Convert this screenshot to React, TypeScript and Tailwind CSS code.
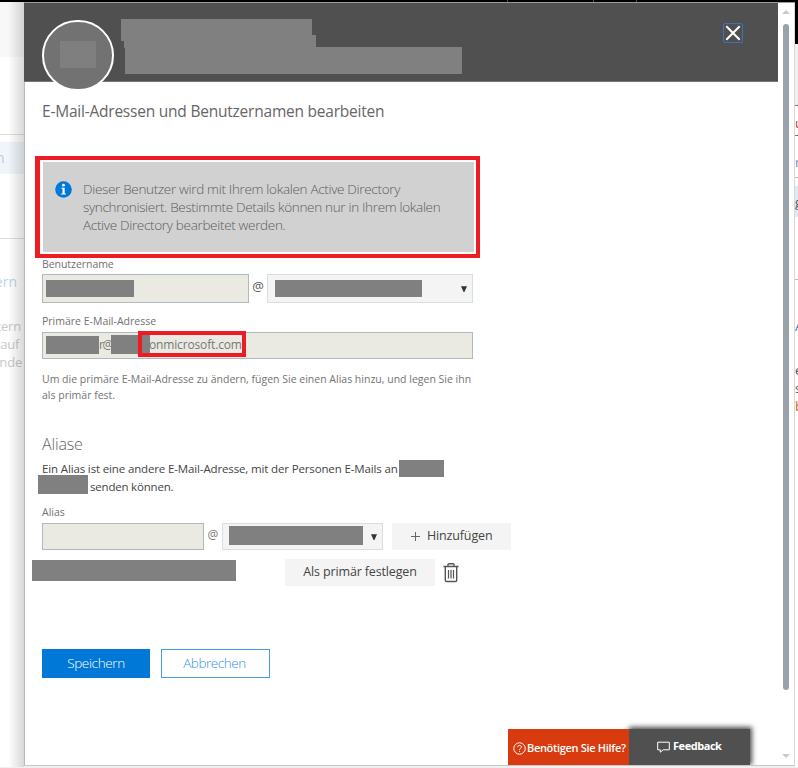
import React from "react";

function Mask({ className }: { className: string }) {
  return <span aria-hidden="true" className={`block shrink-0 bg-[#808080] ${className}`} />;
}

function BackdropLeft() {
  return (
    <div className="relative h-[765px] w-6 shrink-0 overflow-hidden bg-white text-[14px] leading-[18px] text-[#c9c9c9]">
      <div className="h-[55px] bg-[#f8f8f8]" />
      <div className="h-[78px] border-b border-[#dedede]" />
      <div className="mt-[7px] h-8 bg-[#eff5fa] pt-[7px]">
        <span className="-ml-1">n</span>
      </div>
      <div className="h-[65px] border-b border-[#dedede]" />
      <div className="mt-[34px] flex h-[18px] w-[17px] justify-end text-[#bfd3e9]">ern</div>
      <div className="mt-[26px] flex h-[18px] w-[21px] justify-end text-[13px] tracking-[-0.2px]">tern</div>
      <div className="flex h-[18px] w-[19px] justify-end text-[13px] tracking-[-0.3px]">auf</div>
      <div className="flex h-[18px] w-[22px] justify-end text-[13px] tracking-[-0.2px]">nde</div>
      <div className="absolute inset-y-0 right-0 w-4 bg-gradient-to-r from-transparent to-black/15" />
    </div>
  );
}

function BackdropRight() {
  return (
    <div className="h-[765px] w-[3px] shrink-0 overflow-hidden bg-white text-[13px] leading-[18px] text-[#555]">
      <div className="h-[42px] bg-black" />
      <div className="h-[62px] border-b border-[#777] bg-[#f0f0f0]" />
      <div className="h-[30px] border-b border-[#777] pt-[8px] text-[#a04040]">u</div>
      <div className="h-[42px] border-b border-[#bbb] pt-[17px] text-[#7090c0]">n</div>
      <div className="mt-2 h-[31px] bg-[#dcebf7] pt-[7px]">g</div>
      <div className="h-[63px] border-b border-[#bbb]" />
      <div className="h-[37px]" />
      <div className="h-[44px] text-[#4870b0]">A</div>
      <div>e</div>
      <div>s</div>
      <div className="text-[#c07020]">b</div>
    </div>
  );
}

function PanelHeader() {
  return (
    <header className="relative h-[79px] w-[754px] border-b border-[#777] bg-[#505050]">
      <div className="absolute left-[18px] top-[17px] flex h-[71px] w-[72px] items-start justify-center rounded-full border-2 border-white bg-[#727272] pt-[19px]">
        <span className="block h-[27px] w-9 bg-[#7f7f7f]" />
      </div>
      <div className="ml-[97px] pt-4">
        <Mask className="h-[17px] w-[191px]" />
        <Mask className="-mt-px ml-0 h-[6px] w-[195px]" />
        <Mask className="ml-[3px] h-[7px] w-[192px]" />
        <Mask className="-mt-px ml-1 h-[27px] w-[337px]" />
      </div>
      <button aria-label="Schließen" className="absolute left-[699px] top-[20px] flex h-5 w-5 items-center justify-center rounded-[2px] border-[1.5px] border-[#3f70bd]">
        <svg width="18" height="18" viewBox="0 0 18 18" fill="none" stroke="#fff" strokeWidth="2" className="shrink-0">
          <path d="M2.3 2.3 15.7 15.7M15.7 2.3 2.3 15.7" />
        </svg>
      </button>
    </header>
  );
}

function Notice() {
  return (
    <div className="-ml-[7px] mt-[33px] h-[102px] w-[445px] border-4 border-l-[5px] border-[#ed1c24] bg-white py-[2px] pl-[3px] pr-[2px]">
      <div className="flex h-[90px] bg-[#d1d1d1] pl-3 pt-[18px]">
        <svg width="17" height="17" viewBox="0 0 17 17" className="mt-[1px] shrink-0">
          <circle cx="8.5" cy="8.5" r="8.3" fill="#0078d7" />
          <circle cx="8.5" cy="4.2" r="1.4" fill="#fff" />
          <path d="M6.5 6.8h3.2v5.6h1.2v1H6.1v-1h1.4V7.8h-1z" fill="#fff" />
        </svg>
        <p className="ml-[11px] whitespace-nowrap text-[13.5px] font-light leading-[18px] text-[#5c5c5c]">
          <span className="block tracking-[-0.32px]">Dieser Benutzer wird mit Ihrem lokalen Active Directory</span>
          <span className="block tracking-[-0.32px]">synchronisiert. Bestimmte Details können nur in Ihrem lokalen</span>
          <span className="block tracking-[-0.32px]">Active Directory bearbeitet werden.</span>
        </p>
      </div>
    </div>
  );
}

function Caret({ className }: { className: string }) {
  return (
    <svg width="6" height="6" viewBox="0 0 6 6" className={`shrink-0 ${className}`}>
      <path d="M0 .3h6L3.4 6h-.8z" fill="#333" />
    </svg>
  );
}

function TrashIcon() {
  return (
    <svg width="16" height="20" viewBox="0 0 16 20" fill="none" stroke="#555" className="ml-2 shrink-0">
      <path d="M.5 3.5h15M5 3.2V1.6C5 1 5.5.8 6 .8h4c.5 0 1 .2 1 .8v1.6M2.3 3.8v13.4c0 .8.5 1.3 1.3 1.3h8.8c.8 0 1.3-.5 1.3-1.3V3.8" strokeWidth="1.4" />
      <path d="M5.5 7v8.5M8 7v8.5M10.5 7v8.5" strokeWidth="1.2" />
    </svg>
  );
}

function Form() {
  return (
    <main className="flex-1 whitespace-nowrap pl-[18px]">
      <h1 className="mt-[17px] h-6 text-[15.5px] leading-6 tracking-[-0.22px] text-[#666]">E-Mail-Adressen und Benutzernamen bearbeiten</h1>
      <Notice />
      <label className="block h-4 text-[10.5px] leading-[12px] tracking-[-0.05px] text-[#717171]">Benutzername</label>
      <div className="flex h-[29px] items-center">
        <div className="flex h-[29px] w-[207px] items-center border border-[#aebabd] bg-[#eaeae3] pl-[3px]">
          <Mask className="-mt-px h-[17px] w-[88px]" />
        </div>
        <span className="-mt-1 w-[18px] text-center text-[13px] text-[#555]">@</span>
        <div className="flex h-[29px] w-[206px] items-center border border-[#d5dfe4] bg-[#f4f4f4] pl-[7px]">
          <Mask className="-mt-px h-[17px] w-[147px]" />
          <Caret className="ml-[39px]" />
        </div>
      </div>

      <label className="mt-[10px] block h-[19px] text-[10.5px] leading-4 text-[#717171]">Primäre E-Mail-Adresse</label>
      <div className="relative h-[27px] w-[431px] border border-[#aebabd] bg-[#eaeae3]">
        <div className="flex h-full items-center pb-[2px] pl-[3px] text-[12px] text-[#777]">
          <Mask className="h-[18px] w-[53px]" />
          <span className="w-[12px] tracking-[-1.5px]">r@</span>
          <Mask className="relative h-[19px] w-[39px]" />
          <span className="-ml-px tracking-[-0.15px]">onmicrosoft.com</span>
        </div>
        <div className="absolute -top-[2px] left-[95px] h-[26px] w-[108px] border-4 border-[#ed1c24]" />
      </div>
      <p className="mt-3 text-[10.5px] leading-4 text-[#737373]">
        <span className="block">Um die primäre E-Mail-Adresse zu ändern, fügen Sie einen Alias hinzu, und legen Sie ihn</span>
        <span className="block">als primär fest.</span>
      </p>

      <h2 className="mt-[29px] h-6 text-[16px] font-light leading-6 tracking-[-0.15px] text-[#666]">Aliase</h2>
      <div className="mt-1 text-[11.5px] leading-[18px] text-[#444]">
        <div className="flex h-[18px]">
          <span className="w-[357px] tracking-[-0.14px]">Ein Alias ist eine andere E-Mail-Adresse, mit der Personen E-Mails an</span>
          <Mask className="relative h-[17px] w-[45px]" />
        </div>
        <div className="-ml-1 flex h-[18px] items-center">
          <Mask className="-mt-[5px] h-[19px] w-[50px]" />
          <span className="ml-[2px] tracking-[-0.2px]">senden können.</span>
        </div>
      </div>

      <label className="mt-[7px] block h-[20px] pt-px text-[10.5px] leading-4 text-[#717171]">Alias</label>
      <div className="flex h-[27px] items-center">
        <div className="h-[27px] w-[162px] border border-[#aebabd] bg-[#eaeae3]" />
        <span className="-mt-[3px] w-[18px] text-center text-[12px] text-[#777]">@</span>
        <div className="flex h-[27px] w-[161px] items-center border border-[#d5dfe4] bg-[#f4f4f4] pl-[6px]">
          <Mask className="-mt-[2px] h-[19px] w-[134px]" />
          <Caret className="ml-[8px]" />
        </div>
        <button className="ml-[9px] flex h-[27px] w-[119px] items-center bg-[#f4f4f4] pl-[19px] text-[12.5px] text-[#444]">
          <svg width="9" height="9" viewBox="0 0 9 9" stroke="#666"><path d="M0 4.5h9M4.5 0v9" /></svg>
          <span className="ml-[7px] tracking-[-0.15px]">Hinzufügen</span>
        </button>
      </div>
      <div className="-ml-[10px] mt-[9px] flex h-[27px] items-center">
        <Mask className="-mt-[4px] h-[21px] w-[204px]" />
        <button className="ml-[49px] h-[27px] w-[150px] bg-[#f4f4f4] text-[12.5px] tracking-[-0.15px] text-[#444]">Als primär festlegen</button>
        <TrashIcon />
      </div>

      <div className="mt-[63px] flex gap-[11px] text-[13.5px]">
        <button className="h-[29px] w-[108px] bg-[#0078d7] font-light tracking-[-0.35px] text-white">Speichern</button>
        <button className="h-[29px] w-[109px] border border-[#489ae0] pr-[2px] font-light tracking-[-0.45px] text-[#3293e5]">Abbrechen</button>
      </div>
    </main>
  );
}

function SupportBar() {
  return (
    <footer className="ml-[484px] flex h-[36px] whitespace-nowrap text-[11px] text-white">
      <button className="relative z-10 flex w-[121px] items-center bg-[#d83b0f] pl-[5px] pt-[2px]">
        <svg width="13" height="13" viewBox="0 0 13 13" fill="none" stroke="#fff" className="shrink-0">
          <circle cx="6.5" cy="6.5" r="5.7" />
          <path d="M4.7 5.1c0-2.4 3.7-2.2 3.7 0C8.4 6.3 6.5 6.4 6.5 7.8M6.5 8.8v1.2" />
        </svg>
        <span className="ml-[1px] font-semibold tracking-[-0.32px]">Benötigen Sie Hilfe?</span>
      </button>
      <button className="flex w-[121px] items-center bg-[#505050] pb-[1px] pl-7 shadow-[1px_-1px_5px_1px_rgba(0,0,0,.7)]">
        <svg width="13" height="12" viewBox="0 0 13 12" fill="none" stroke="#fff" className="shrink-0">
          <path d="M.7 1.2h11.6v7.6H6.2L3.3 11.2V8.8H.7z" />
        </svg>
        <span className="ml-[3px] font-bold tracking-[-0.45px]">Feedback</span>
      </button>
    </footer>
  );
}

function Scrollbar() {
  return (
    <div className="flex w-[17px] flex-col items-center bg-transparent pr-px pt-[7px]">
      <svg width="8" height="4" viewBox="0 0 8 4"><path d="M4 0 8 4H0z" fill="#c5cbd0" /></svg>
      <div className="mt-[10px] h-[666px] w-[6px] rounded-full bg-[#98a3ac]" />
      <svg width="8" height="4" viewBox="0 0 8 4" className="mt-[64px]"><path d="M0 0h8L4 4z" fill="#c5cbd0" /></svg>
    </div>
  );
}

export default function App() {
  return (
    <div className="h-[768px] w-[798px] overflow-hidden bg-[#f0f0f0] font-['Open_Sans','Noto_Sans',sans-serif]">
      <div className="flex h-[2px] bg-black pl-[507px]">
        <span className="w-px bg-[#555]" />
        <span className="ml-[85px] w-px bg-[#555]" />
        <span className="ml-[42px] w-px bg-[#555]" />
      </div>
      <div className="flex h-[764px]">
        <BackdropLeft />
        <section className="flex w-[771px] shrink-0 overflow-hidden border-b border-t border-b-[#c8c8c8] border-t-[#999] bg-white shadow-[inset_-1px_0_#d8d8d8]">
          <div className="flex w-[754px] shrink-0 flex-col shadow-[inset_1px_0_#bbb]">
            <PanelHeader />
            <Form />
            <SupportBar />
          </div>
          <Scrollbar />
        </section>
        <BackdropRight />
      </div>
    </div>
  );
}
